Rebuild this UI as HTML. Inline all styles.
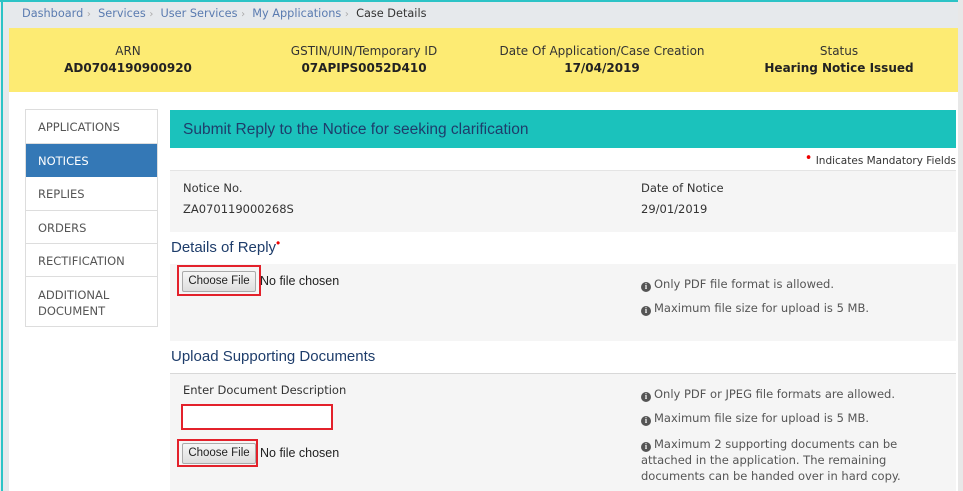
<!DOCTYPE html>
<html><head><meta charset="utf-8"><style>
*{margin:0;padding:0;box-sizing:border-box}
body{width:963px;height:491px;overflow:hidden;background:#e6e9ec;position:relative;font-family:"DejaVu Sans","Liberation Sans",sans-serif;font-size:11.5px;color:#333}
.a{position:absolute;white-space:nowrap}
#tb{left:0;top:0;width:963px;height:2px;background:#2cc3c6}
#lb{left:1px;top:0;width:2px;height:491px;background:#2cc3c6}
#main{left:9px;top:28px;width:949px;height:463px;background:#fff}
#rs{left:958px;top:0;width:5px;height:491px;background:#e8e8e8}
.bc{top:7px;font-size:11.3px;color:#5a7bb0}
.sep{color:#aaa;font-size:10px}
#yel{left:9px;top:28px;width:949px;height:64px;background:#fdeb73}
.yh{top:44px;font-size:12px;color:#333;text-align:center}
.yv{top:61px;font-size:12px;font-weight:bold;color:#222;text-align:center}
#side{left:25px;top:109px;width:133px;height:218px;border:1px solid #ddd;background:#fff}
.si{position:absolute;left:0;width:131px;border-bottom:1px solid #ddd;font-size:11.5px;color:#555;padding-left:12px}
#hdr{left:170px;top:110px;width:786px;height:38px;background:#1bc2bc;font-family:"Liberation Sans",sans-serif;font-size:15.5px;color:#1e3d6b;padding:11px 0 0 13px}
.pan{background:#f5f5f5;position:absolute;left:170px;width:786px}
.h2{font-family:"Liberation Sans",sans-serif;font-size:15px;color:#1e3d6b}
.info{font-size:11.5px;color:#555}
.ic{display:inline-block;width:10px;height:10px;border-radius:50%;background:#555;color:#fff;font-size:8px;line-height:10px;text-align:center;font-weight:bold;font-family:"Liberation Serif",serif;vertical-align:-1px;margin-right:3px}
.btn{position:absolute;width:74px;height:21px;border:1px solid #aaa;border-radius:2px;background:linear-gradient(#f6f6f6,#dedede);font-family:"Liberation Sans",sans-serif;font-size:11.5px;color:#222;text-align:center;line-height:19px}
.red{position:absolute;border:2px solid #e3212b}
</style></head><body>
<div class="a" id="tb"></div>
<div class="a" id="lb"></div>
<div class="a" id="main"></div>
<div class="a" id="rs"></div>
<div class="a bc" style="left:22px">Dashboard <span class="sep">›</span>&nbsp; Services <span class="sep">›</span>&nbsp; User Services <span class="sep">›</span>&nbsp; My Applications <span class="sep">›</span>&nbsp; <span style="color:#333">Case Details</span></div>
<div class="a" id="yel"></div>
<div class="a yh" style="left:28px;width:200px">ARN</div>
<div class="a yv" style="left:28px;width:200px">AD0704190900920</div>
<div class="a yh" style="left:264px;width:200px">GSTIN/UIN/Temporary ID</div>
<div class="a yv" style="left:264px;width:200px">07APIPS0052D410</div>
<div class="a yh" style="left:492px;width:220px">Date Of Application/Case Creation</div>
<div class="a yv" style="left:492px;width:220px">17/04/2019</div>
<div class="a yh" style="left:739px;width:200px">Status</div>
<div class="a yv" style="left:739px;width:200px">Hearing Notice Issued</div>

<div class="a" id="side">
<div class="si" style="top:0;height:34px;padding-top:10px">APPLICATIONS</div>
<div class="si" style="top:34px;height:33px;padding-top:10px;background:#3478b6;color:#fff;border-color:#3478b6">NOTICES</div>
<div class="si" style="top:67px;height:34px;padding-top:10px">REPLIES</div>
<div class="si" style="top:101px;height:33px;padding-top:10px">ORDERS</div>
<div class="si" style="top:134px;height:33px;padding-top:10px">RECTIFICATION</div>
<div class="si" style="top:167px;height:50px;padding-top:10px;line-height:16px;border:0">ADDITIONAL<br>DOCUMENT</div>
</div>

<div class="a" id="hdr">Submit Reply to the Notice for seeking clarification</div>
<div class="a" style="right:7px;top:153px;font-size:10.5px;color:#333"><span style="color:#e00;font-size:13px;position:relative;top:-2px">•</span> Indicates Mandatory Fields</div>

<div class="pan" style="top:170px;height:62px;border-top:1px solid #e4e4e4"></div>
<div class="a" style="left:183px;top:181px">Notice No.</div>
<div class="a" style="left:183px;top:202px">ZA070119000268S</div>
<div class="a" style="left:641px;top:181px">Date of Notice</div>
<div class="a" style="left:641px;top:202px">29/01/2019</div>

<div class="a h2" style="left:171px;top:239px">Details of Reply<span style="color:#e00;font-size:12px;position:relative;top:-5px">•</span></div>
<div class="pan" style="top:264px;height:77px"></div>
<div class="red" style="left:177px;top:265px;width:84px;height:31px"></div>
<div class="btn" style="left:182px;top:271px">Choose File</div>
<div class="a" style="left:260px;top:274px;font-family:'Liberation Sans',sans-serif;font-size:12.5px;color:#222">No file chosen</div>
<div class="a info" style="left:641px;top:277px"><span class="ic">i</span>Only PDF file format is allowed.</div>
<div class="a info" style="left:641px;top:301px"><span class="ic">i</span>Maximum file size for upload is 5 MB.</div>

<div class="a h2" style="left:171px;top:348px">Upload Supporting Documents</div>
<div class="pan" style="top:373px;height:118px;border-top:1px solid #d8d8d8"></div>
<div class="a" style="left:183px;top:383px">Enter Document Description</div>
<div class="red" style="left:181px;top:404px;width:152px;height:26px;background:#fff"></div>
<div class="red" style="left:177px;top:439px;width:81px;height:28px"></div>
<div class="btn" style="left:182px;top:443px">Choose File</div>
<div class="a" style="left:260px;top:446px;font-family:'Liberation Sans',sans-serif;font-size:12.5px;color:#222">No file chosen</div>
<div class="a info" style="left:641px;top:387px"><span class="ic">i</span>Only PDF or JPEG file formats are allowed.</div>
<div class="a info" style="left:641px;top:411px"><span class="ic">i</span>Maximum file size for upload is 5 MB.</div>
<div class="a info" style="left:641px;top:436px;line-height:16px"><span class="ic">i</span>Maximum 2 supporting documents can be<br>attached in the application. The remaining<br>documents can be handed over in hard copy.</div>
</body></html>
